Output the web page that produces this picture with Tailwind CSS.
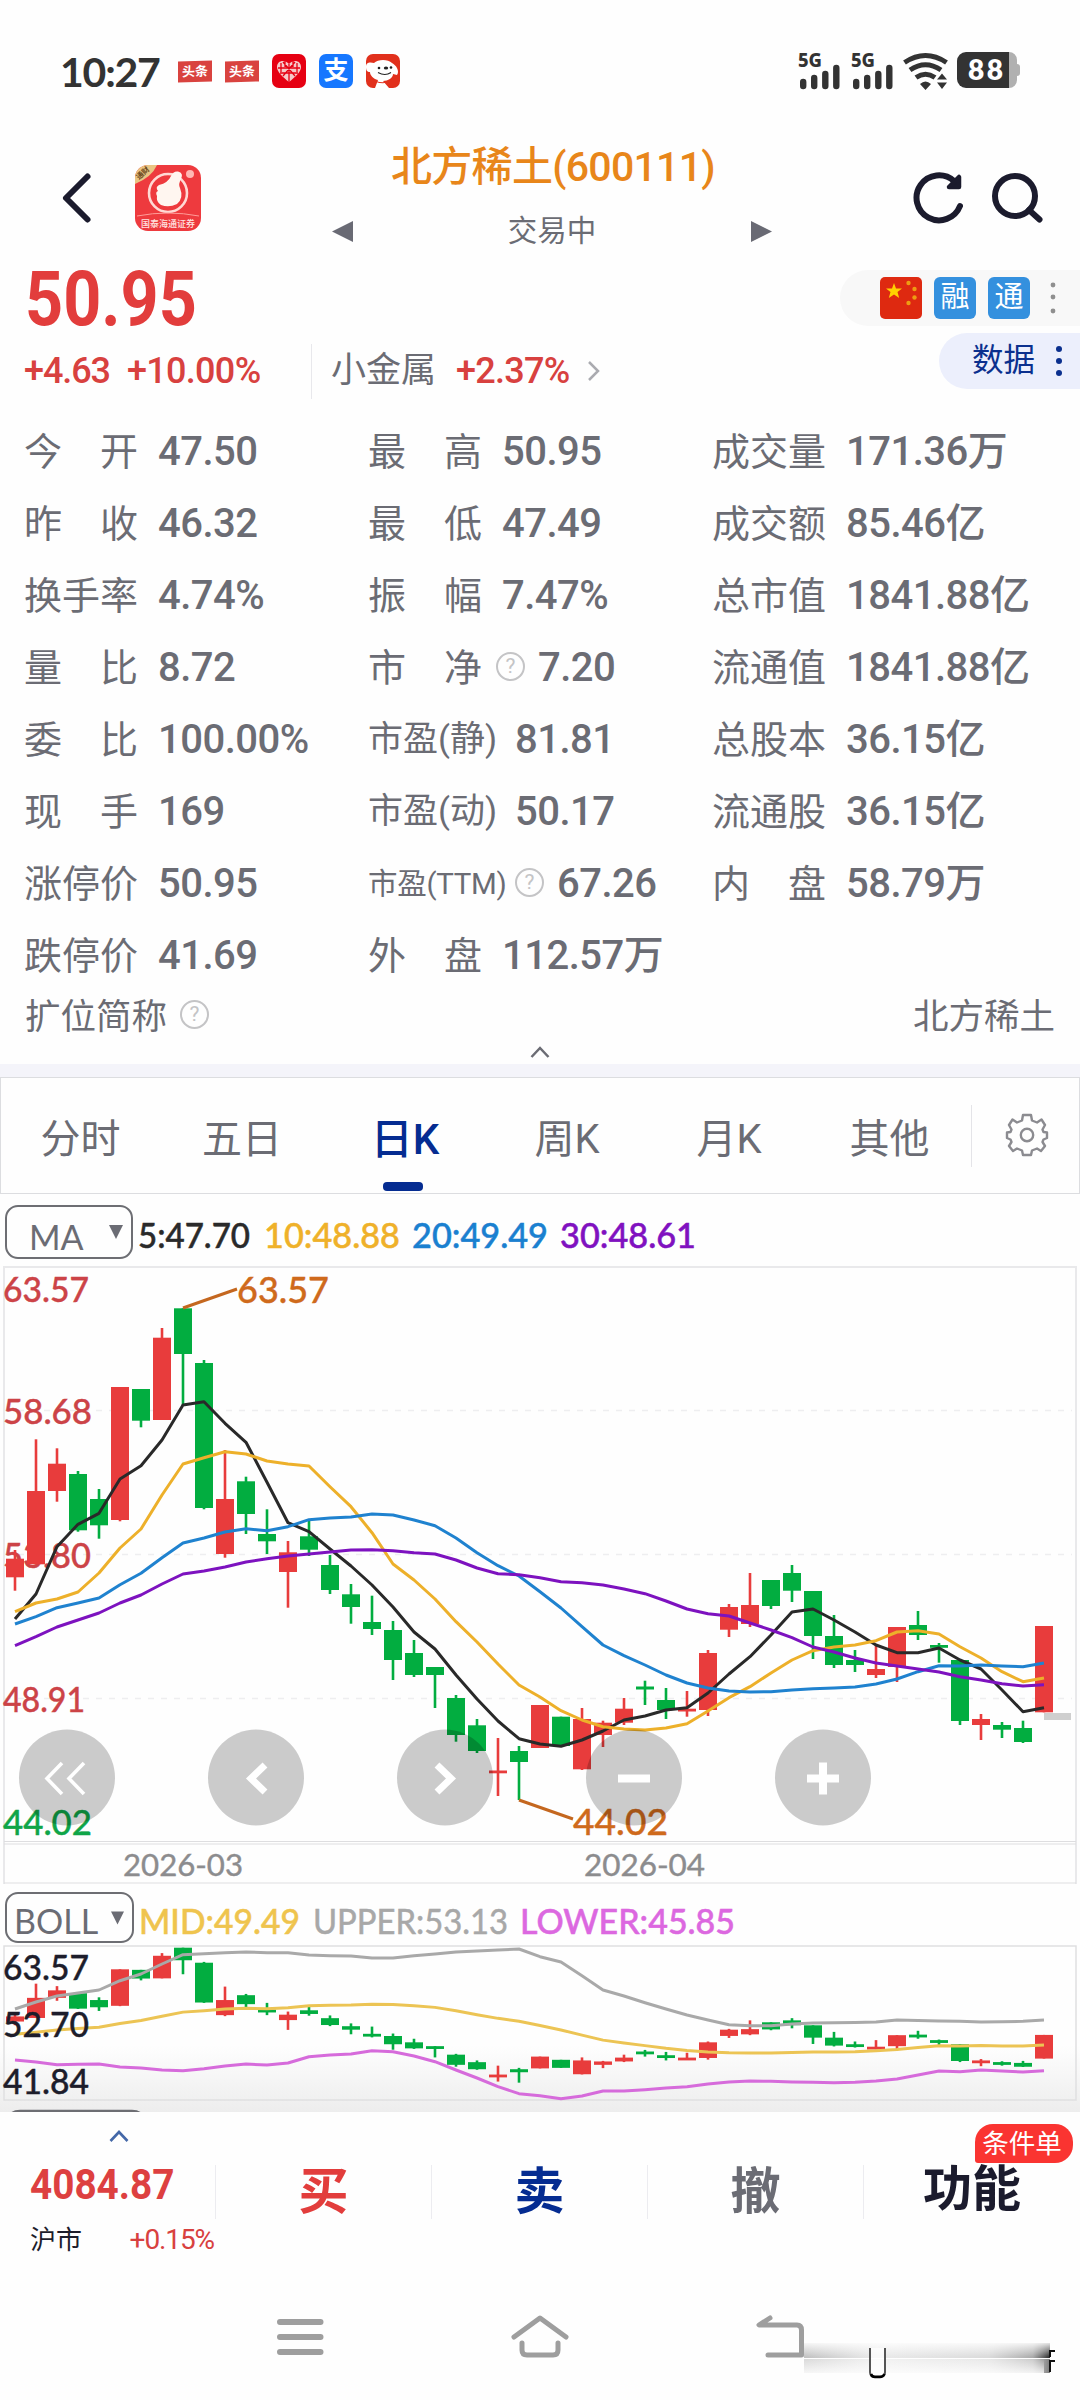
<!DOCTYPE html>
<html lang="zh-CN">
<head>
    <meta charset="UTF-8">
    <meta name="viewport" content="width=device-width, initial-scale=1.0">
    <title>北方稀土(600111)</title>
    <script src="https://cdn.jsdelivr.net/npm/@tailwindcss/browser@4"></script>
</head>
<body class="bg-[#fefefe] w-[1080px] h-[2400px] overflow-hidden font-[Roboto,'Noto_Sans_CJK_SC',sans-serif] text-[#6b6c74]">

    <!-- Status bar -->
    <div class="h-[142px] flex items-center justify-between pl-[60px] pr-[60px]">
        <div class="flex items-center">
            <span class="w-[118px] text-[41px] leading-none font-bold text-[#333] font-[Lato,sans-serif] tracking-[-1.200px]">10:27</span>
            <div class="flex gap-[13px]">
                <div class="size-[34px] flex items-center"><span class="w-[34px] h-[21px] bg-[#d9433f] text-white text-[13px] font-bold leading-[21px] text-center -skew-y-2">头条</span></div>
                <div class="size-[34px] flex items-center"><span class="w-[34px] h-[21px] bg-[#d9433f] text-white text-[13px] font-bold leading-[21px] text-center -skew-y-2">头条</span></div>
                <svg class="size-[34px]" viewBox="0 0 34 34">
                    <rect width="34" height="34" rx="7" fill="#e60012"/>
                    <path d="M17 28C11 23 5 18 5 13C5 6 13 5 17 10C21 5 29 6 29 13C29 18 23 23 17 28Z" fill="#f6c9c9"/>
                    <path d="M17 10v18M6 14h22M8 19h18M11 8l12 14M23 8L11 22M9 9v9M25 9v9M13 7v6M21 7v6" stroke="#e60012" stroke-width="1.3" fill="none"/>
                </svg>
                <div class="size-[34px] rounded-[7px] bg-[#1677ff] text-white text-[25px] font-bold leading-[33px] text-center">支</div>
                <svg class="size-[34px]" viewBox="0 0 34 34">
                    <rect width="34" height="34" rx="7" fill="#e1301c"/>
                    <path d="M0 13C0 8 4 8 8 9C12 5 22 5 26 9C30 11 34 17 31 21L27 20C27 24 22 27 17 27L23 34H9L12 26C7 25 4 21 4 18C1 18 0 16 0 13Z" fill="#fff"/>
                    <path d="M9 27Q17 31 25 26" stroke="#e1301c" stroke-width="1" fill="none"/>
                    <circle cx="13" cy="14" r="1.300" fill="#222"/><circle cx="25" cy="13.500" r="1.300" fill="#222"/>
                    <ellipse cx="20" cy="14" rx="2.200" ry="1.500" fill="#222"/>
                    <path d="M12 18.500q7 4 13 0" stroke="#222" stroke-width="1.100" fill="none"/>
                </svg>
            </div>
        </div>
        <svg class="w-[227px] h-[42px]" viewBox="793 51 227 42">
            <g font-family="Noto Sans" font-weight="800" font-size="19" fill="#333">
                <text x="798" y="68" textLength="24" lengthAdjust="spacingAndGlyphs">5G</text>
                <text x="851" y="68" textLength="24" lengthAdjust="spacingAndGlyphs">5G</text>
            </g>
            <g stroke="#333" stroke-width="6.4" stroke-linecap="round">
                <path d="M803.2 83v4M814.2 79v8M825.3 75v12M836.3 69v18"/>
                <path d="M856.2 83v4M867.2 79v8M878.3 75v12M889.3 69v18"/>
            </g>
            <g fill="none" stroke="#333" stroke-width="5">
                <path d="M904.500 63.500Q925.500 49.500 946.500 63.500"/>
                <path d="M910 71Q925.500 60.500 941 71"/>
                <path d="M916 78.500Q925.500 72 935 78.500"/>
            </g>
            <path d="M920 85q5.500-5 11 0l-5.500 6zM937 80.500l5-6 5 6zM937 83.500l5 6.500 5-6.500z" fill="#333"/>
            <path d="M1008 53h1a8 8 0 0 1 8 8v4q3 0 3 3v6q0 3-3 3v4a8 8 0 0 1-8 8h-1z" fill="#b0b0b0"/>
            <path d="M966 53h43v36h-43a9 9 0 0 1-9-9v-18a9 9 0 0 1 9-9z" fill="#333"/>
            <text x="968" y="81" font-family="Lato" font-weight="800" font-size="28" fill="#fff" textLength="35">88</text>
        </svg>
    </div>

    <!-- Title bar -->
    <div class="h-[112px] flex justify-between pl-[60px] pr-[36px]">
        <div class="w-[260px] flex items-center">
            <svg class="w-[33px] h-[56px]" viewBox="0 0 33 56"><path d="M27.500 6.500L6 28L27.500 49.500" fill="none" stroke="#1b1b2d" stroke-width="6" stroke-linecap="round" stroke-linejoin="round"/></svg>
            <svg class="w-[66px] h-[66px] ml-[42px]" viewBox="0 0 66 66">
                <defs><clipPath id="logo"><rect width="66" height="66" rx="13"/></clipPath></defs>
                <g clip-path="url(#logo)">
                    <rect width="66" height="66" fill="#ee3a3e"/>
                    <path d="M0 0H22Q17 12 0 19Z" fill="#e9c583"/>
                    <text x="0" y="0" font-size="7.500" font-weight="700" fill="#6c4a1c" transform="translate(4 15) rotate(-42)">通财</text>
                    <circle cx="33" cy="28" r="19" fill="none" stroke="#ffd9d4" stroke-width="2.600"/>
                    <path d="M24 20Q33 18 36 11Q38 6 43 6.500Q49 8 46 14Q43 19 45 23Q49 33 42 39Q34 43 26 40Q21 37 22 31Q20 27 23 26Q20 22 24 20Z" fill="#fff6f0"/>
                    <circle cx="55" cy="9" r="4" fill="#ffb9b4"/>
                    <path d="M2 51Q33 45 64 51" stroke="#ff9c98" stroke-width="1" fill="none"/>
                    <text x="6" y="62" font-size="9" font-weight="500" fill="#ffe3e0" textLength="54">国泰海通证券</text>
                </g>
            </svg>
        </div>
        <div class="w-[440px] text-center">
            <div class="h-[48px] text-[41px] leading-[50px] font-medium text-[#e8861a] whitespace-nowrap pl-[26px] tracking-[-0.700px]">北方稀土(600111)</div>
            <div class="flex items-center justify-between pt-[20px]">
                <svg class="w-[21px] h-[21px] ml-[12px]" viewBox="0 0 21 21"><path d="M21 0V21L0 10.500Z" fill="#696a74"/></svg>
                <span class="text-[29.500px] leading-[42px]">交易中</span>
                <svg class="w-[21px] h-[21px] mr-[-12px]" viewBox="0 0 21 21"><path d="M0 0V21L21 10.500Z" fill="#696a74"/></svg>
            </div>
        </div>
        <div class="w-[284px] flex items-center justify-end gap-[28px]">
            <svg class="w-[52px] h-[56px]" viewBox="912 170 52 56">
                <path d="M960 206A22.500 22.500 0 1 1 954 181" fill="none" stroke="#1b1b2d" stroke-width="6" stroke-linecap="round"/>
                <path d="M959 177V187H949Z" fill="#1b1b2d" stroke="#1b1b2d" stroke-width="4.500" stroke-linejoin="round"/>
            </svg>
            <svg class="w-[52px] h-[56px]" viewBox="992 170 52 56">
                <circle cx="1015" cy="196" r="20" fill="none" stroke="#1b1b2d" stroke-width="6"/>
                <path d="M1029 210L1039.500 219.500" stroke="#1b1b2d" stroke-width="6" stroke-linecap="round"/>
            </svg>
        </div>
    </div>

    <!-- Price -->
    <div class="h-[161px] flex justify-between">
        <div>
            <div class="h-[88px] flex items-center pl-[25px] pt-[2px]">
                <span class="text-[76px] leading-none font-bold text-[#e23d3c] origin-left scale-x-[0.875]">50.95</span>
            </div>
            <div class="h-[56px] flex items-center text-[36px] pt-[2px]">
                <span class="w-[103px] ml-[24px] text-[#d8413f] font-medium tracking-[-1.100px]">+4.63</span>
                <span class="w-[184px] text-[#d8413f] font-medium tracking-[-0.700px]">+10.00%</span>
                <span class="w-px h-[55px] bg-[#e8e8ec]"></span>
                <span class="ml-[19px] w-[125px] text-[35px]">小金属</span>
                <span class="w-[131px] text-[#d8413f] font-medium tracking-[-0.700px]">+2.37%</span>
                <svg class="w-[14px] h-[22px]" viewBox="0 0 14 22"><path d="M2 2L11 11L2 20" fill="none" stroke="#aaabb0" stroke-width="2.500"/></svg>
            </div>
        </div>
        <div class="pt-4 flex flex-col items-end gap-[7px]">
            <div class="w-[240px] h-[56px] rounded-l-full bg-[#f8f8f8] flex items-center pl-[40px] gap-[12px]">
                <svg class="size-[42px]" viewBox="0 0 42 42">
                    <rect width="42" height="42" rx="5" fill="#de2910"/>
                    <path d="M14 6L16 11.500H22L17.500 15L19.200 21L14 17.500L8.800 21L10.500 15L6 11.500H12Z" fill="#ffd100"/>
                    <g fill="#ee9b13"><circle cx="28.500" cy="6" r="2.200"/><circle cx="34.500" cy="12" r="2.200"/><circle cx="34.500" cy="20.500" r="2.200"/><circle cx="28.500" cy="26" r="2.200"/></g>
                </svg>
                <span class="size-[42px] rounded-[6px] bg-[#3490de] text-white text-[29px] leading-[41px] text-center">融</span>
                <span class="size-[42px] rounded-[6px] bg-[#3490de] text-white text-[29px] leading-[41px] text-center">通</span>
                <svg class="w-[6px] h-[32px] ml-[8px]" viewBox="0 0 6 32" fill="#8f8f8f"><circle cx="3" cy="3" r="2.400"/><circle cx="3" cy="15" r="2.400"/><circle cx="3" cy="29" r="2.400"/></svg>
            </div>
            <div class="w-[141px] h-[56px] rounded-l-full bg-[#eceffc] flex items-center pl-[33px] text-[31.500px] text-[#0b308e]">
                <span class="w-[84px]">数据</span>
                <svg class="w-[6px] h-[30px]" viewBox="0 0 6 30" fill="#0b308e"><circle cx="3" cy="3" r="3"/><circle cx="3" cy="15" r="3"/><circle cx="3" cy="27" r="3"/></svg>
            </div>
        </div>
    </div>

    <!-- Key figures -->
    <div class="h-[576px] pt-px grid grid-cols-[344px_344px_1fr] auto-rows-[72px] items-center pl-[24px] text-[40px] font-medium tracking-[-0.500px] whitespace-nowrap">
        <div class="flex items-center"><span class="w-[134px] pr-[20px] flex justify-between text-[38px] font-normal tracking-normal"><i class="not-italic">今</i><i class="not-italic">开</i></span>47.50</div>
        <div class="flex items-center"><span class="w-[134px] pr-[20px] flex justify-between text-[38px] font-normal tracking-normal"><i class="not-italic">最</i><i class="not-italic">高</i></span>50.95</div>
        <div class="flex items-center"><span class="w-[134px] text-[38px] font-normal tracking-normal">成交量</span>171.36万</div>

        <div class="flex items-center"><span class="w-[134px] pr-[20px] flex justify-between text-[38px] font-normal tracking-normal"><i class="not-italic">昨</i><i class="not-italic">收</i></span>46.32</div>
        <div class="flex items-center"><span class="w-[134px] pr-[20px] flex justify-between text-[38px] font-normal tracking-normal"><i class="not-italic">最</i><i class="not-italic">低</i></span>47.49</div>
        <div class="flex items-center"><span class="w-[134px] text-[38px] font-normal tracking-normal">成交额</span>85.46亿</div>

        <div class="flex items-center"><span class="w-[134px] text-[38px] font-normal tracking-normal">换手率</span>4.74%</div>
        <div class="flex items-center"><span class="w-[134px] pr-[20px] flex justify-between text-[38px] font-normal tracking-normal"><i class="not-italic">振</i><i class="not-italic">幅</i></span>7.47%</div>
        <div class="flex items-center"><span class="w-[134px] text-[38px] font-normal tracking-normal">总市值</span>1841.88亿</div>

        <div class="flex items-center"><span class="w-[134px] pr-[20px] flex justify-between text-[38px] font-normal tracking-normal"><i class="not-italic">量</i><i class="not-italic">比</i></span>8.72</div>
        <div class="flex items-center"><span class="w-[114px] flex justify-between text-[38px] font-normal tracking-normal"><i class="not-italic">市</i><i class="not-italic">净</i></span><span class="size-[29px] ml-[14px] mr-[13px] mb-[4px] rounded-full border-2 border-[#c4c4c6] text-[#c4c4c6] text-[21px] leading-[25px] text-center font-normal tracking-normal">?</span>7.20</div>
        <div class="flex items-center"><span class="w-[134px] text-[38px] font-normal tracking-normal">流通值</span>1841.88亿</div>

        <div class="flex items-center"><span class="w-[134px] pr-[20px] flex justify-between text-[38px] font-normal tracking-normal"><i class="not-italic">委</i><i class="not-italic">比</i></span>100.00%</div>
        <div class="flex items-center"><span class="w-[147px] text-[35px] font-normal tracking-normal">市盈(静)</span>81.81</div>
        <div class="flex items-center"><span class="w-[134px] text-[38px] font-normal tracking-normal">总股本</span>36.15亿</div>

        <div class="flex items-center"><span class="w-[134px] pr-[20px] flex justify-between text-[38px] font-normal tracking-normal"><i class="not-italic">现</i><i class="not-italic">手</i></span>169</div>
        <div class="flex items-center"><span class="w-[147px] text-[35px] font-normal tracking-normal">市盈(动)</span>50.17</div>
        <div class="flex items-center"><span class="w-[134px] text-[38px] font-normal tracking-normal">流通股</span>36.15亿</div>

        <div class="flex items-center"><span class="w-[134px] text-[38px] font-normal tracking-normal">涨停价</span>50.95</div>
        <div class="flex items-center"><span class="w-[134px] text-[29.500px] font-normal tracking-[-0.300px]">市盈(TTM)</span><span class="size-[29px] ml-[13px] mr-[13px] mb-[4px] rounded-full border-2 border-[#c4c4c6] text-[#c4c4c6] text-[21px] leading-[25px] text-center font-normal tracking-normal">?</span>67.26</div>
        <div class="flex items-center"><span class="w-[134px] pr-[20px] flex justify-between text-[38px] font-normal tracking-normal"><i class="not-italic">内</i><i class="not-italic">盘</i></span>58.79万</div>

        <div class="flex items-center"><span class="w-[134px] text-[38px] font-normal tracking-normal">跌停价</span>41.69</div>
        <div class="flex items-center"><span class="w-[134px] pr-[20px] flex justify-between text-[38px] font-normal tracking-normal"><i class="not-italic">外</i><i class="not-italic">盘</i></span>112.57万</div>
    </div>
    <div class="h-[51px] flex items-center pl-[25px] pr-[25px] pt-[3px] text-[35.500px]">
        <span>扩位简称</span>
        <span class="size-[29px] ml-[13px] mb-[7px] rounded-full border-2 border-[#c4c4c6] text-[#c4c4c6] text-[21px] leading-[25px] text-center">?</span>
        <span class="ml-auto">北方稀土</span>
    </div>
    <div class="h-[22px] flex justify-center">
        <svg class="w-[20px] h-[14px] mt-[3px]" viewBox="0 0 20 14"><path d="M1.500 12L10 3L18.500 12" fill="none" stroke="#6b6c74" stroke-width="2.500"/></svg>
    </div>
    <div class="h-[13px] bg-[#f4f4fa]"></div>

    <!-- Period tabs -->
    <div class="h-[117px] border border-[#dcdde0] flex items-center text-[40px]">
        <span class="w-[161px] pt-[9px] pr-[2px] text-center">分时</span>
        <span class="w-[162px] pt-[9px] pr-[2px] text-center">五日</span>
        <span class="w-[162px] h-full flex flex-col items-center pr-[5px] text-[42px] font-medium text-[#052c91]">
            <b class="h-[104px] pt-[24px] pl-[5px] font-medium leading-[76px]">日K</b>
            <i class="w-[40px] h-[9px] rounded-[4px] bg-[#052c91]"></i>
        </span>
        <span class="w-[162px] pt-[9px] text-center">周K</span>
        <span class="w-[162px] pt-[9px] text-center">月K</span>
        <span class="w-[161px] pt-[9px] pr-[2px] text-center">其他</span>
        <span class="w-px h-[62px] bg-[#e4e4e8]"></span>
        <svg class="w-[44px] h-[44px] ml-[33px] mb-[2px]" viewBox="0 0 44 44" fill="none" stroke="#8b8b90" stroke-width="2.400" stroke-linejoin="round">
            <path d="M18 2H26L27 7.500L32 9.500L36.500 6.500L40 12L37.500 16.500L38.500 19L42 19.500V25L38.500 26.500L37.500 29L40 33L36 38L32 35.500L27 37.500L26 42H18L17 37.500L12 35.500L8 38L4 33L6.500 29L5.500 26.500L2 25V19.500L5.500 19L6.500 16.500L4 12L7.500 6.500L12 9.500L17 7.500Z"/>
            <circle cx="22" cy="22" r="6.200"/>
        </svg>
    </div>

    <!-- MA legend -->
    <div class="h-[72px] flex items-center pl-[5px] pt-[3px] text-[34px] font-[Lato,sans-serif]">
        <div class="w-[128px] h-[54px] rounded-[13px] border-2 border-[#6d6e73] flex items-center justify-between pl-[22px] pr-[8px] pt-[9px] text-[34px]">MA
            <svg class="w-[14px] h-[14px] mb-[8px]" viewBox="0 0 14 14"><path d="M0 0H14L7 14Z" fill="#6b6c74"/></svg>
        </div>
        <svg class="w-[580px] h-[54px]" viewBox="133 1205 580 54" font-size="34" font-weight="500" stroke-width="0.500">
            <text x="138" y="1248" fill="#2a2a2a" stroke="#2a2a2a" textLength="112" lengthAdjust="spacingAndGlyphs">5:47.70</text>
            <text x="264" y="1248" fill="#efb12a" stroke="#efb12a" textLength="136" lengthAdjust="spacingAndGlyphs">10:48.88</text>
            <text x="412" y="1248" fill="#1a80d0" stroke="#1a80d0" textLength="136" lengthAdjust="spacingAndGlyphs">20:49.49</text>
            <text x="560" y="1248" fill="#8011c0" stroke="#8011c0" textLength="136" lengthAdjust="spacingAndGlyphs">30:48.61</text>
        </svg>
    </div>

    <!-- Daily K chart -->
    <svg class="block w-[1080px] h-[618px] font-[Lato,sans-serif]" viewBox="0 1266 1080 618">
        <path d="M4 1884V1267H1076V1884" fill="none" stroke="#e9e9eb" stroke-width="2"/>
        <path d="M4 1841.500H1076M4 1844H1076M4 1883H1076" stroke="#dedee0" stroke-width="1.200"/>
        <path d="M5 1410.500H1072M5 1554.500H1072M5 1698.500H1072" stroke="#eeeef0" stroke-width="1.500" stroke-dasharray="6 7"/>
        <g font-size="35" fill="#cc4347" font-weight="500" stroke="#cc4347" stroke-width="0.400">
            <text x="3" y="1302" textLength="86" lengthAdjust="spacingAndGlyphs">63.57</text>
            <text x="3" y="1424" textLength="89" lengthAdjust="spacingAndGlyphs">58.68</text>
            <text x="3" y="1568" textLength="88" lengthAdjust="spacingAndGlyphs">53.80</text>
            <text x="3" y="1712" textLength="82" lengthAdjust="spacingAndGlyphs">48.91</text>
            <text x="3" y="1835" textLength="89" lengthAdjust="spacingAndGlyphs" fill="#0fa548" stroke="#0fa548">44.02</text>
        </g>
        <g id="candles"></g>
        <path d="M1044 1716.500H1071" stroke="#cfcfcf" stroke-width="7"/>
        <g id="averages" fill="none" stroke-width="3" stroke-linejoin="round"></g>
        <g font-size="37" fill="#cf6a1c" font-weight="500">
            <path d="M183 1308L237 1289M519 1800L573 1819" stroke="#c4671f" stroke-width="3"/>
            <text x="237" y="1303" stroke="#cf6a1c" stroke-width="0.400" textLength="92" lengthAdjust="spacingAndGlyphs">63.57</text>
            <text x="573" y="1835" stroke="#cf6a1c" stroke-width="0.400" textLength="95" lengthAdjust="spacingAndGlyphs">44.02</text>
        </g>
        <g fill="#000" fill-opacity="0.2">
            <circle cx="67" cy="1777.500" r="48"/>
            <circle cx="256" cy="1777.500" r="48"/>
            <circle cx="445" cy="1777.500" r="48"/>
            <circle cx="634" cy="1777.500" r="48"/>
            <circle cx="823" cy="1777.500" r="48"/>
        </g>
        <g fill="none" stroke="#fff">
            <path d="M62 1763L47 1778.500L62 1794M84 1763L69 1778.500L84 1794" stroke-width="3.600"/>
            <path d="M265 1765L251 1778.500L265 1792M437 1765L451 1778.500L437 1792" stroke-width="7"/>
            <path d="M618 1778.500H650M807 1778.500H839M823 1762.500V1794.500" stroke-width="8"/>
        </g>
        <g font-size="31" fill="#8c8c8e" stroke="#8c8c8e" stroke-width="0.400">
            <text x="123" y="1876" textLength="120" lengthAdjust="spacingAndGlyphs">2026-03</text>
            <text x="584" y="1876" textLength="121" lengthAdjust="spacingAndGlyphs">2026-04</text>
        </g>
    </svg>

    <!-- BOLL legend -->
    <div class="h-[61px] flex items-center pl-[5px] pt-[7px] pb-[1px] font-[Lato,sans-serif]">
        <div class="w-[129px] h-[51px] rounded-[13px] border-2 border-[#6d6e73] flex items-center justify-between pl-[7px] pr-[8px] text-[34px] pt-[6px]">BOLL
            <svg class="w-[13px] h-[14px] mb-[6px]" viewBox="0 0 14 14"><path d="M0 0H14L7 14Z" fill="#6b6c74"/></svg>
        </div>
        <svg class="w-[620px] h-[50px]" viewBox="134 1892 620 50" font-size="34" stroke-width="0.500">
            <text x="139" y="1933" fill="#efc44e" stroke="#efc44e" font-weight="500" textLength="161" lengthAdjust="spacingAndGlyphs">MID:49.49</text>
            <text x="313" y="1933" fill="#a8a8a8" stroke="#a8a8a8" textLength="195" lengthAdjust="spacingAndGlyphs">UPPER:53.13</text>
            <text x="520" y="1933" fill="#dc68e0" stroke="#dc68e0" font-weight="500" textLength="215" lengthAdjust="spacingAndGlyphs">LOWER:45.85</text>
        </svg>
    </div>

    <!-- BOLL chart -->
    <div class="h-[167px] bg-linear-to-b from-[#fefefe] from-60% to-[#ededed]">
        <svg class="block w-[1080px] h-[167px] font-[Lato,sans-serif]" viewBox="0 1945 1080 167">
            <path d="M4 1946H1076V2100H4Z" fill="none" stroke="#dfdfe1" stroke-width="1.500"/>
            <g id="boll-candles"></g>
            <g id="boll-lines" fill="none" stroke-width="3" stroke-linejoin="round"></g>
            <g font-size="35" fill="#1d1d2b" font-weight="500" stroke="#1d1d2b" stroke-width="0.400">
                <text x="3" y="1980" textLength="86" lengthAdjust="spacingAndGlyphs">63.57</text>
                <text x="3" y="2037" textLength="86" lengthAdjust="spacingAndGlyphs">52.70</text>
                <text x="3" y="2094" textLength="86" lengthAdjust="spacingAndGlyphs">41.84</text>
            </g>
            <path d="M11 2114Q14 2111 20 2111H132Q138 2111 141 2114" fill="none" stroke="#6d6e73" stroke-width="2.500"/>
        </svg>
    </div>

    <!-- Trade bar -->
    <div class="h-[176px] bg-[#fefefe] flex">
        <div class="w-[215px]">
            <svg class="w-[20px] h-[12px] mt-[18px] ml-[109px]" viewBox="0 0 20 12"><path d="M1.500 11L10 2L18.500 11" fill="none" stroke="#4468a8" stroke-width="2.600"/></svg>
            <div class="h-[40px] mt-[22px] pl-[30px] flex items-center"><span class="text-[43px] leading-none font-bold text-[#dd4040] origin-left scale-x-[0.9]">4084.87</span></div>
            <div class="h-[42px] mt-[15px] pl-[30px] pr-[1px] flex items-center justify-between text-[26px] text-[#1d1d2b]"><span>沪市</span><span class="text-[28px] tracking-[-1.100px] text-[#d8413f]">+0.15%</span></div>
        </div>
        <div class="w-[216px] pt-[53px]"><div class="h-[54px] border-l border-[#ececf0] text-[50px] leading-[54px] font-bold text-center text-[#e23d3c]">买</div></div>
        <div class="w-[216px] pt-[53px]"><div class="h-[54px] border-l border-[#ececf0] text-[50px] leading-[54px] font-bold text-center text-[#052c91]">卖</div></div>
        <div class="w-[216px] pt-[53px]"><div class="h-[54px] border-l border-[#ececf0] text-[50px] leading-[54px] font-bold text-center text-[#6b6c74]">撤</div></div>
        <div class="w-[217px] pt-[53px] relative">
            <div class="h-[54px] border-l border-[#ececf0] text-[49px] leading-[50px] font-bold text-center text-[#1b1b2d]">功能</div>
            <span class="absolute top-[12px] right-[7px] w-[98px] h-[39px] rounded-[18px] rounded-bl-[3px] bg-[#fa3431] text-white text-[26.500px] leading-[40px] pr-[4px] text-center">条件单</span>
        </div>
    </div>

    <!-- System navigation -->
    <svg class="block w-[1080px] h-[112px]" viewBox="0 2288 1080 112">
        <defs>
            <linearGradient id="smearX"><stop offset="0" stop-color="#777" stop-opacity="0.45"/><stop offset="0.3" stop-color="#999" stop-opacity="0.2"/><stop offset="0.75" stop-color="#888" stop-opacity="0.3"/><stop offset="0.93" stop-color="#666" stop-opacity="0.55"/><stop offset="1" stop-color="#111" stop-opacity="0.9"/></linearGradient>
            <linearGradient id="fade" x2="0" y2="1"><stop offset="0" stop-color="#fefefe"/><stop offset="1" stop-color="#fefefe" stop-opacity="0"/></linearGradient>
            <linearGradient id="fadeDown" x2="0" y2="1"><stop offset="0" stop-color="#fefefe" stop-opacity="0"/><stop offset="1" stop-color="#fefefe" stop-opacity="0.900"/></linearGradient>
        </defs>
        <g fill="none" stroke="#9e9e9e" stroke-width="5" stroke-linecap="round" stroke-linejoin="round">
            <path d="M280 2322H320.500M280 2337H320.500M280 2352H320.500" stroke-width="6"/>
            <path d="M514 2337L540 2318L566 2337M522 2343V2350Q522 2355 527 2355H553Q558 2355 558 2350V2343"/>
            <path d="M770 2318L759 2325H797Q801.500 2325 801.500 2330V2355H768"/>
        </g>
        <rect x="804" y="2343" width="246" height="15" fill="url(#smearX)"/>
        <rect x="804" y="2341" width="248" height="16" fill="url(#fade)"/>
        <rect x="804" y="2359" width="246" height="14" fill="url(#smearX)" opacity="0.600"/>
        <rect x="804" y="2359" width="240" height="16" fill="url(#fadeDown)"/>
        <path d="M870 2348V2372Q870 2376.500 874 2376.500H881Q885 2376.500 885 2372V2348" fill="#fff" fill-opacity="0.700" stroke="#555" stroke-width="2"/>
        <path d="M871 2374Q872 2377 875 2377H880Q883 2377 884.500 2374" fill="none" stroke="#000" stroke-width="2.500"/>
        <path d="M1055 2351H1050V2357M1055 2361H1050V2372" fill="none" stroke="#111" stroke-width="2"/>
    </svg>

<script>
    // [color, high, top, bottom, low]
    const candles = [
        ['r',1550,1558.7,1577.3,1590.7], ['r',1439.3,1491,1564.3,1564.3], ['r',1448.3,1463.7,1491,1501.7], ['g',1471,1474,1530.3,1531.7], ['g',1489,1499,1525.3,1538.7],
        ['r',1387,1387,1520,1521.3], ['g',1389,1389,1420.7,1427.3], ['r',1328,1337.7,1420,1420], ['g',1308.3,1308.3,1354,1405], ['g',1360,1363,1508,1509.3],
        ['r',1450,1499,1554,1557.7], ['g',1476.7,1481.3,1514,1534], ['g',1509.3,1534,1541.3,1554], ['r',1541,1552.3,1572,1607.7], ['g',1520,1536.3,1549.7,1556],
        ['g',1555,1565,1590,1594], ['g',1584,1594.3,1607,1623.7], ['g',1595.7,1622,1629,1635], ['g',1621,1630,1660,1680], ['g',1640,1653,1675,1677],
        ['g',1667,1667,1675,1708], ['g',1695,1698,1735,1741.7], ['g',1719,1725.3,1751,1753], ['r',1738,1770.5,1773,1796], ['g',1746,1751,1762,1800],
        ['r',1705,1705,1748,1748], ['g',1716.7,1716.7,1746,1746], ['r',1708,1719,1769.3,1770], ['r',1720.7,1722.7,1735,1747], ['r',1698,1708.7,1722.7,1725],
        ['g',1680.7,1686.5,1689.5,1705], ['g',1688,1700,1710,1719], ['r',1691,1708.7,1711.3,1716.7], ['r',1650,1653,1710,1716], ['r',1604,1607,1629.7,1637],
        ['r',1573,1605,1624,1627], ['g',1580,1580,1606,1609], ['g',1565,1573,1590.7,1602], ['g',1591,1591,1636,1659], ['g',1615,1636,1665,1668],
        ['g',1650,1660,1665,1672], ['r',1645,1669,1675,1678], ['r',1627,1627,1667,1682], ['g',1611,1625,1635,1640], ['g',1643,1645,1647.5,1662.7],
        ['g',1660,1660,1721,1725], ['r',1714,1719,1725,1740], ['g',1722,1725,1729.7,1738], ['g',1720.7,1728,1742,1743], ['r',1626,1626,1712.3,1712.3]
    ];
    const ma5 = [1619,1594,1546.7,1524.3,1513.3,1479,1465.7,1440,1405,1401.7,1423.3,1442.3,1482.3,1522.7,1531.7,1549,1566,1585,1607,1632,1649,1675,1699,1721,1738.7,1744,1746.3,1740,1731,1720,1716,1710,1707.7,1693,1674,1656.7,1635,1612,1609,1620,1632,1645,1652.7,1652.7,1648,1660,1669,1690,1711.7,1707.7];
    const ma10 = [1611.7,1603,1599,1592,1573,1548,1529,1495,1464,1457.7,1451.7,1454,1461,1464,1466,1486.7,1506.7,1532.7,1564,1580,1599,1621.7,1642,1664,1685,1697,1710.7,1720,1726.7,1729,1730,1728,1723.7,1711,1697.7,1686.7,1673,1660,1650.7,1647,1645,1640.7,1632,1630.7,1634,1646.7,1658,1671.7,1681.7,1678];
    const ma20 = [1624,1616.7,1607.7,1603,1598,1584.7,1573.3,1557.7,1543,1538,1532,1528.7,1530.7,1526.7,1519.7,1518,1517,1514,1515,1520,1525.7,1538,1552.7,1565.7,1576,1591.7,1608,1626.7,1645,1655.7,1665,1675,1683,1688,1691,1692,1691.7,1690,1688.7,1688,1687,1684,1679,1671.7,1665.7,1666,1665,1666,1666.7,1663];
    const ma30 = [1645.7,1636.7,1627,1620,1613,1603,1595,1584,1574,1571,1567,1562,1558.7,1556,1554,1552,1550,1549.7,1550.7,1552.7,1554,1560,1568,1573.7,1574.7,1577.7,1581.7,1582.7,1585,1589,1593.7,1601,1609,1613.7,1616,1623,1630,1637.7,1647,1652,1658,1663,1666,1669,1672,1676.7,1680,1683.7,1686,1684.7];
    const upper = [2009,2002,1996,1993,1990,1980.7,1974,1964,1954.7,1953.7,1952.7,1952,1952.7,1952.7,1955,1955.7,1956,1958,1958,1955.7,1954,1952,1951,1950,1949,1956.7,1962,1975.7,1990,1996,2002.7,2009,2015,2020,2024.7,2025.7,2025.7,2024,2023,2022.7,2022.5,2022,2020,2020.5,2021,2021.3,2022,2021.7,2021.3,2020];
    const lower = [2060,2062,2064.7,2064.3,2064,2067,2068,2070,2070.7,2068.7,2066,2064,2065,2063,2056.7,2055,2054,2050.7,2051.7,2056,2061.7,2070,2078,2086.7,2093.7,2095.7,2098.7,2096,2091,2091,2089.7,2088,2086.7,2084,2082,2081,2081.3,2082,2082.3,2082.7,2082.3,2081,2079,2075,2071,2071.7,2070,2071,2072,2070.7];

    const x = i => 15 + 21 * i;
    // the lower chart shows the same prices on a flatter scale
    const toBoll = y => 1947.7 + (y - 1308.3) * 0.2745;

    function drawCandles(id, scale) {
        document.getElementById(id).innerHTML = candles.map(([c, high, top, bottom, low], i) => {
            const color = c === 'r' ? '#e83c3c' : '#02ad40';
            const [h, t, b, l] = [high, top, bottom, low].map(scale);
            return `<path d="M${x(i)} ${h}V${l}" stroke="${color}" stroke-width="2.6"/>
                    <rect x="${x(i) - 9}" y="${t}" width="18" height="${Math.max(b - t, 2.8)}" fill="${color}"/>`;
        }).join('');
    }

    function line(values, color) {
        const points = values.map((y, i) => `${x(i)},${y}`).join(' ');
        return `<polyline points="${points}" stroke="${color}"/>`;
    }

    drawCandles('candles', y => y);
    drawCandles('boll-candles', toBoll);
    document.getElementById('averages').innerHTML =
        line(ma5, '#292929') + line(ma10, '#edb02a') + line(ma20, '#1f82cf') + line(ma30, '#7d12bf');
    document.getElementById('boll-lines').innerHTML =
        line(upper, '#a9a9a9') + line(ma20.map(toBoll), '#ecc454') + line(lower, '#d66bdb');
</script>
</body>
</html>
